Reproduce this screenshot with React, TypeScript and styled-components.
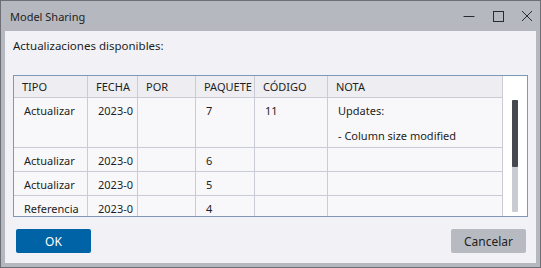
import React from 'react';
import styled, { createGlobalStyle } from 'styled-components';

const GlobalStyle = createGlobalStyle`
  html, body {
    margin: 0;
    padding: 0;
    background: #ffffff;
  }
  body {
    font-family: "Noto Sans", "Open Sans", sans-serif;
    font-size: 12px;
    color: #1f2023;
  }
`;

const rows = [
  { tipo: 'Actualizar', fecha: '2023-0', por: '', paquete: '7', codigo: '11', nota: ['Updates:', '- Column size modified'] },
  { tipo: 'Actualizar', fecha: '2023-0', por: '', paquete: '6', codigo: '', nota: [] },
  { tipo: 'Actualizar', fecha: '2023-0', por: '', paquete: '5', codigo: '', nota: [] },
  { tipo: 'Referencia', fecha: '2023-0', por: '', paquete: '4', codigo: '', nota: [] },
];

const columns = ['TIPO', 'FECHA', 'POR', 'PAQUETE', 'CÓDIGO', 'NOTA'];

const Window = styled.div`
  width: 541px;
  height: 268px;
  box-sizing: border-box;
  border: 1px solid #6d6f76;
  background: #b6b8c0;
  display: flex;
  flex-direction: column;
`;

const TitleBar = styled.div`
  height: 30px;
  display: flex;
  align-items: center;
  padding-left: 9px;
  padding-right: 7px;
`;

const Title = styled.span`
  flex: 1;
  font-size: 11px;
  color: #1d1e22;
`;

const Controls = styled.div`
  display: flex;
  align-items: center;
  gap: 17px;
`;

const Body = styled.div`
  flex: 1;
  margin: 0 4px 4px 4px;
  background: #f2f2f6;
  display: flex;
  flex-direction: column;
  padding: 6px 8px 0 8px;
`;

const Label = styled.div`
  font-size: 11.5px;
  height: 18px;
  line-height: 18px;
  color: #1d1e22;
`;

const TableFrame = styled.div`
  margin-top: 20px;
  height: 142px;
  box-sizing: border-box;
  border: 1px solid #7f98b6;
  display: flex;
  overflow: hidden;
  background: #ffffff;
`;

const Grid = styled.div`
  display: grid;
  grid-template-columns: 74px 50px 58px 59px 73px 175px;
  grid-auto-rows: min-content;
  align-content: start;
`;

const HeadCell = styled.div`
  height: 22px;
  box-sizing: border-box;
  border-right: 1px solid #c9ccd4;
  border-bottom: 1px solid #c9ccd4;
  background: #eeeef2;
  padding-left: 8px;
  font-size: 11px;
  line-height: 21px;
  color: #1d1e22;
  white-space: nowrap;
  overflow: hidden;
`;

const Cell = styled.div<{ $tall?: boolean }>`
  height: ${(p) => (p.$tall ? '50px' : '24px')};
  box-sizing: border-box;
  border-right: 1px solid #c9ccd4;
  border-bottom: 1px solid #c9ccd4;
  background: #f8f8fa;
  padding: 5px 0 0 10px;
  font-size: 11px;
  line-height: 16px;
  color: #1d1e22;
  white-space: nowrap;
  overflow: hidden;
`;

const NoteLine = styled.div`
  & + & {
    margin-top: 9px;
  }
`;

const ScrollArea = styled.div`
  flex: 1;
  position: relative;
  background: #ffffff;
`;

const Track = styled.div`
  position: absolute;
  left: 9px;
  top: 24px;
  width: 6px;
  height: 112px;
  border-radius: 1px;
  background: #c9cbd3;
`;

const Thumb = styled.div`
  height: 67px;
  border-radius: 1px;
  background: #45484f;
`;

const Footer = styled.div`
  display: flex;
  justify-content: space-between;
  padding: 12px 2px 0 3px;
`;

const Button = styled.button<{ $primary?: boolean }>`
  width: 75px;
  height: 24px;
  border: none;
  border-radius: 2px;
  font-family: "Noto Sans", "Open Sans", sans-serif;
  font-size: 12px;
  background: ${(p) => (p.$primary ? '#0063a6' : '#b8bac2')};
  color: ${(p) => (p.$primary ? '#ffffff' : '#1d1e22')};
  padding: 0;
`;

const App = () => {
  return (
    <>
      <GlobalStyle />
      <Window>
        <TitleBar>
          <Title>Model Sharing</Title>
          <Controls>
            <svg width="12" height="12" viewBox="0 0 12 12">
              <path d="M0.5 6.5h11" stroke="#2a2b30" strokeWidth="1" />
            </svg>
            <svg width="12" height="12" viewBox="0 0 12 12">
              <rect x="1.5" y="1.5" width="10" height="10" fill="none" stroke="#2a2b30" strokeWidth="1" />
            </svg>
            <svg width="12" height="12" viewBox="0 0 12 12">
              <path d="M1 1L11 11M11 1L1 11" stroke="#2a2b30" strokeWidth="1" />
            </svg>
          </Controls>
        </TitleBar>
        <Body>
          <Label>Actualizaciones disponibles:</Label>
          <TableFrame>
            <Grid>
              {columns.map((c) => (
                <HeadCell key={c}>{c}</HeadCell>
              ))}
              {rows.map((r, i) => {
                const tall = r.nota.length > 1;
                return (
                  <React.Fragment key={i}>
                    <Cell $tall={tall}>{r.tipo}</Cell>
                    <Cell $tall={tall}>{r.fecha}</Cell>
                    <Cell $tall={tall}>{r.por}</Cell>
                    <Cell $tall={tall}>{r.paquete}</Cell>
                    <Cell $tall={tall}>{r.codigo}</Cell>
                    <Cell $tall={tall}>
                      {r.nota.map((n) => (
                        <NoteLine key={n}>{n}</NoteLine>
                      ))}
                    </Cell>
                  </React.Fragment>
                );
              })}
            </Grid>
            <ScrollArea>
              <Track>
                <Thumb />
              </Track>
            </ScrollArea>
          </TableFrame>
          <Footer>
            <Button $primary>OK</Button>
            <Button>Cancelar</Button>
          </Footer>
        </Body>
      </Window>
    </>
  );
};

export default App;
